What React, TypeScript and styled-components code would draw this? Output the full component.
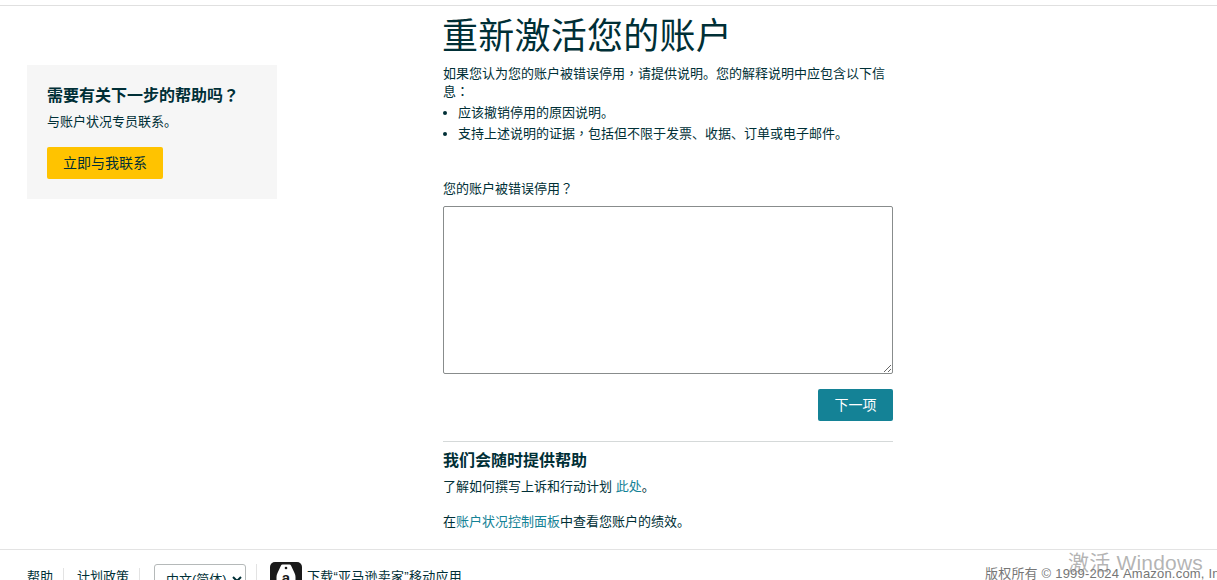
import React from "react";
import styled, { createGlobalStyle } from "styled-components";

const Global = createGlobalStyle`
  html, body { margin: 0; padding: 0; height: 580px; overflow: hidden; background: #fff; }
  body { font-family: "Liberation Sans", "Noto Sans CJK SC", Arial, sans-serif; color: #002f36; font-size: 13px; }
  * { box-sizing: border-box; }
`;

const Page = styled.div`
  position: relative;
  height: 580px;
  overflow: hidden;
  display: flex;
  flex-direction: column;
`;

const TopRule = styled.div`
  height: 6px;
  flex: none;
  border-bottom: 1px solid #e0e0e0;
`;

const Main = styled.main`
  height: 543px;
  flex: none;
  display: flex;
  padding-left: 27px;
`;

const HelpCard = styled.aside`
  width: 250px;
  height: 134px;
  margin-top: 59px;
  margin-right: 166px;
  padding: 21px 20px 0;
  background: #f6f6f6;
`;

const CardTitle = styled.h3`
  margin: 0;
  font-size: 16px;
  line-height: 20px;
  font-weight: 700;
`;

const CardText = styled.p`
  margin: 7px 0 0;
  font-size: 13px;
  line-height: 18px;
`;

const ContactButton = styled.button`
  display: block;
  margin-top: 16px;
  width: 116px;
  height: 32px;
  border: 0;
  border-radius: 2px;
  background: #ffc300;
  color: #002f36;
  font: inherit;
  font-size: 14px;
  padding: 0 0 2px;
`;

const Content = styled.section`
  width: 450px;
  flex: none;
`;

const Title = styled.h1`
  margin: 7px 0 0 -1px;
  font-size: 36px;
  line-height: 48px;
  font-weight: 400;
  letter-spacing: 0.25px;
`;

/* Full-width punctuation sits centred in its cell in the reference. */
const Punct = styled.span`
  font-family: "Noto Sans CJK TC", sans-serif;
  line-height: 0;
`;

const Intro = styled.p`
  margin: 4px 0 0;
  line-height: 18px;
`;

const Points = styled.ul`
  margin: 1px 0 0;
  padding: 0 0 0 15px;
  list-style: disc;
`;

const Point = styled.li`
  line-height: 21px;
`;

const FieldLabel = styled.label`
  display: block;
  margin-top: 36px;
  line-height: 18px;
`;

const Explanation = styled.textarea`
  display: block;
  margin-top: 8px;
  width: 450px;
  height: 168px;
  border: 1px solid #888c8c;
  border-radius: 2px;
  background: #fff;
  resize: vertical;
`;

const Actions = styled.div`
  display: flex;
  justify-content: flex-end;
  margin-top: 15px;
`;

const NextButton = styled.button`
  width: 75px;
  height: 32px;
  border: 0;
  border-radius: 2px;
  background: #148296;
  color: #fff;
  font: inherit;
  font-size: 14px;
  padding: 0 0 2px;
`;

const Rule = styled.hr`
  margin: 20px 0 0;
  border: 0;
  border-top: 1px solid #d5d9d9;
`;

const SupportTitle = styled.h3`
  margin: 9px 0 0;
  font-size: 16px;
  line-height: 20px;
  font-weight: 700;
`;

const SupportText = styled.p<{ $gap: number }>`
  margin: ${(p) => p.$gap}px 0 0;
  line-height: 18px;
`;

const TextLink = styled.a`
  color: #148296;
  text-decoration: none;
`;

const Footer = styled.footer`
  flex: none;
  height: 60px;
  border-top: 1px solid #e3e3e3;
  display: flex;
  align-items: flex-start;
  padding-left: 27px;
  white-space: nowrap;
`;

const FooterItem = styled.a<{ $pad: number; $gap: number }>`
  margin-top: 18px;
  padding-right: ${(p) => p.$pad}px;
  margin-right: ${(p) => p.$gap}px;
  height: 18px;
  line-height: 18px;
  border-right: 1px solid #e3e3e3;
  color: #002f36;
  text-decoration: none;
`;

const LanguageSelect = styled.select`
  margin-top: 14px;
  width: 92px;
  height: 31px;
  border: 1px solid #b5b9b9;
  border-radius: 3px;
  background: #fff;
  color: #002f36;
  font: inherit;
  font-size: 13px;
  padding: 0 0 0 7px;
`;

const FooterDivider = styled.span`
  width: 1px;
  height: 18px;
  margin: 14px 13px 0 10px;
  background: #e3e3e3;
`;

const AppLink = styled.a`
  display: flex;
  align-items: flex-start;
  gap: 5px;
  margin-top: 12px;
  color: #002f36;
  text-decoration: none;
`;

const AppLabel = styled.span`
  margin-top: 6px;
  line-height: 18px;
  letter-spacing: 0.25px;
`;

const Copyright = styled.span`
  margin-left: auto;
  margin-top: 15px;
  width: 232px;
  overflow: hidden;
  line-height: 18px;
  color: #767676;
  font-size: 13px;
  letter-spacing: 0.2px;
`;

const Watermark = styled.div`
  position: absolute;
  left: 1068px;
  top: 550px;
  font-size: 21px;
  line-height: 26px;
  letter-spacing: 0.2px;
  color: rgba(130, 130, 130, 0.6);
  pointer-events: none;
  white-space: nowrap;
`;

const AppIcon = () => (
  <svg width="32" height="32" viewBox="0 0 32 32" aria-hidden="true">
    <rect width="32" height="32" rx="5" fill="#1a1a1a" />
    <path d="M12.500 2.500h7q1 0 1.500 1L24.500 11q1 2 1 4V28h-19V15q0-2 1-4L11 3.500q.5-1 1.500-1z" fill="#fff" />
    <circle cx="16" cy="6" r="1.300" fill="#1a1a1a" />
    <text x="16" y="20.500" textAnchor="middle" fontSize="15" fontWeight="700" fontFamily="Liberation Sans" fill="#1a1a1a">a</text>
  </svg>
);

export default function App() {
  return (
    <Page>
      <Global />
      <TopRule />
      <Main>
        <HelpCard>
          <CardTitle>需要有关下一步的帮助吗<Punct>？</Punct></CardTitle>
          <CardText>与账户状况专员联系。</CardText>
          <ContactButton>立即与我联系</ContactButton>
        </HelpCard>
        <Content>
          <Title>重新激活您的账户</Title>
          <Intro>如果您认为您的账户被错误停用<Punct>，</Punct>请提供说明。您的解释说明中应包含以下信息<Punct>：</Punct></Intro>
          <Points>
            <Point>应该撤销停用的原因说明。</Point>
            <Point>支持上述说明的证据<Punct>，</Punct>包括但不限于发票、收据、订单或电子邮件。</Point>
          </Points>
          <FieldLabel htmlFor="why">您的账户被错误停用<Punct>？</Punct></FieldLabel>
          <Explanation id="why" />
          <Actions>
            <NextButton>下一项</NextButton>
          </Actions>
          <Rule />
          <SupportTitle>我们会随时提供帮助</SupportTitle>
          <SupportText $gap={7}>了解如何撰写上诉和行动计划 <TextLink href="#">此处</TextLink>。</SupportText>
          <SupportText $gap={17}>在<TextLink href="#">账户状况控制面板</TextLink>中查看您账户的绩效。</SupportText>
        </Content>
      </Main>
      <Footer>
        <FooterItem href="#" $pad={10} $gap={13}>帮助</FooterItem>
        <FooterItem href="#" $pad={10} $gap={14}>计划政策</FooterItem>
        <LanguageSelect defaultValue="zh">
          <option value="zh">中文(简体)</option>
        </LanguageSelect>
        <FooterDivider />
        <AppLink href="#">
          <AppIcon />
          <AppLabel>下载“亚马逊卖家”移动应用</AppLabel>
        </AppLink>
        <Copyright>版权所有 © 1999-2024 Amazon.com, Inc. or its affiliates</Copyright>
      </Footer>
      <Watermark>激活 Windows</Watermark>
    </Page>
  );
}
